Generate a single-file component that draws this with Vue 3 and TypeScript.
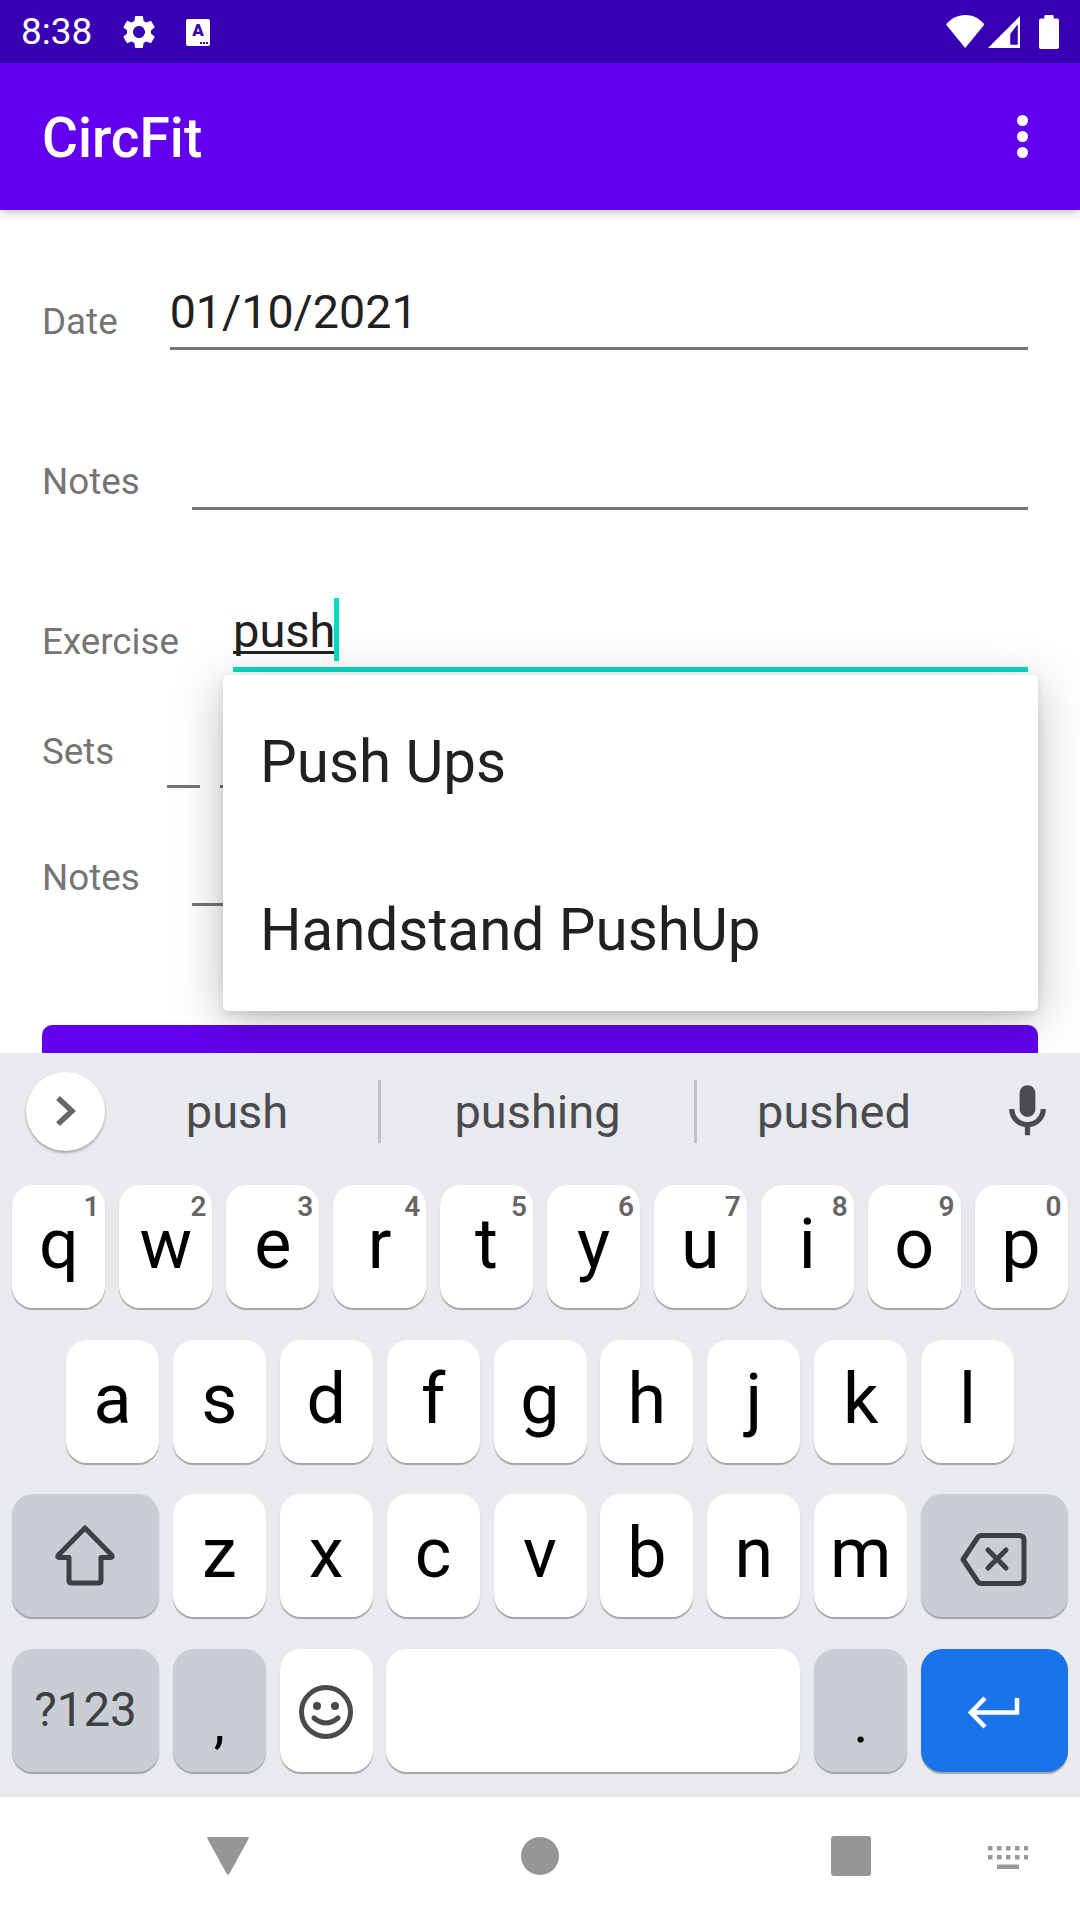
<script setup lang="ts">
const numberRow: [string, string][] = [
  ['q', '1'], ['w', '2'], ['e', '3'], ['r', '4'], ['t', '5'],
  ['y', '6'], ['u', '7'], ['i', '8'], ['o', '9'], ['p', '0'],
];
const homeRow = ['a', 's', 'd', 'f', 'g', 'h', 'j', 'k', 'l'];
const lowerRow = ['z', 'x', 'c', 'v', 'b', 'n', 'm'];
const suggestions = ['Push Ups', 'Handstand PushUp'];
const kbdDots = [0, 9, 18, 27, 36];
</script>

<template>
  <div class="phone">
    <div class="status-bar">
      <span class="clock">8:38</span>
      <svg class="gear" viewBox="0 0 24 24" fill="#fff">
        <path d="M19.14 12.94c.04-.3.06-.61.06-.94 0-.32-.02-.64-.07-.94l2.03-1.58c.18-.14.23-.41.12-.61l-1.92-3.32c-.12-.22-.37-.29-.59-.22l-2.39.96c-.5-.38-1.03-.7-1.62-.94l-.36-2.54c-.04-.24-.24-.41-.48-.41h-3.84c-.24 0-.43.17-.47.41l-.36 2.54c-.59.24-1.13.57-1.62.94l-2.39-.96c-.22-.08-.47 0-.59.22L2.74 8.87c-.12.21-.08.47.12.61l2.03 1.58c-.05.3-.09.63-.09.94s.02.64.07.94l-2.03 1.58c-.18.14-.23.41-.12.61l1.92 3.32c.12.22.37.29.59.22l2.39-.96c.5.38 1.03.7 1.62.94l.36 2.54c.05.24.24.41.48.41h3.84c.24 0 .44-.17.47-.41l.36-2.54c.59-.24 1.13-.56 1.62-.94l2.39.96c.22.08.47 0 .59-.22l1.92-3.32c.12-.22.07-.47-.12-.61l-2.01-1.58zM12 15.6c-1.98 0-3.6-1.62-3.6-3.6s1.62-3.6 3.6-3.6 3.6 1.62 3.6 3.6-1.62 3.6-3.6 3.6z" />
      </svg>
      <div class="a-badge">
        <span class="a-letter">A</span>
        <span class="a-dots"><i></i><i></i><i></i></span>
      </div>
      <div class="status-right">
        <svg class="wifi" viewBox="0 0 38.5 33" fill="#fff">
          <path d="M0 9.5C5 3.5 11.5 0 19.2 0S33.5 3.5 38.5 9.5L19.2 33z" />
        </svg>
        <svg class="signal" viewBox="0 0 32 32">
          <path fill="#fff" fill-rule="evenodd" d="M0 32L32 0V32zM22.4 18V28.6H29.6V8.4z" />
          <path fill="#3700B3" d="M22.6 18.2V28.4H29.4V9z" />
        </svg>
        <svg class="battery" viewBox="0 0 20 34" fill="#fff">
          <path d="M5.4 3.4V1a1 1 0 0 1 1-1h7.2a1 1 0 0 1 1 1v2.4h3.4a2 2 0 0 1 2 2V32a2 2 0 0 1-2 2H2a2 2 0 0 1-2-2V5.4a2 2 0 0 1 2-2z" />
        </svg>
      </div>
    </div>

    <header class="app-bar">
      <span class="title">CircFit</span>
      <div class="overflow"><i></i><i></i><i></i></div>
    </header>

    <main class="content">
      <form class="form" @submit.prevent>
        <div class="row row-date">
          <label class="label">Date</label>
          <div class="field"><span class="value">01/10/2021</span></div>
        </div>
        <div class="row row-notes">
          <label class="label">Notes</label>
          <div class="field"></div>
        </div>
        <div class="row row-exercise">
          <label class="label">Exercise</label>
          <div class="field focused">
            <span class="value composing">push</span>
            <span class="caret"></span>
          </div>
        </div>
        <div class="row row-sets">
          <label class="label">Sets</label>
          <div class="field short"></div>
          <div class="field"></div>
        </div>
        <div class="row row-notes2">
          <label class="label">Notes</label>
          <div class="field"></div>
        </div>
        <button type="submit" class="save"></button>
      </form>

      <ul class="dropdown">
        <li v-for="item in suggestions" :key="item">{{ item }}</li>
      </ul>
    </main>

    <section class="keyboard">
      <div class="strip">
        <div class="chevron">
          <svg viewBox="0 0 20 30" width="20" height="30" fill="none" stroke="#666" stroke-width="5.5">
            <path d="M2 2L16 15L2 28" />
          </svg>
        </div>
        <span class="word first">push</span>
        <span class="divider"></span>
        <span class="word second">pushing</span>
        <span class="divider"></span>
        <span class="word third">pushed</span>
        <svg class="mic" viewBox="0 0 24 24" fill="#4a4b4e">
          <path d="M12 14c1.66 0 3-1.34 3-3V5c0-1.66-1.34-3-3-3S9 3.34 9 5v6c0 1.66 1.34 3 3 3z" />
          <path d="M17 11c0 2.76-2.24 5-5 5s-5-2.24-5-5H5c0 3.53 2.61 6.43 6 6.92V21h2v-3.08c3.39-.49 6-3.39 6-6.92h-2z" />
        </svg>
      </div>

      <div class="keys">
        <div class="key-row">
          <div v-for="[letter, hint] in numberRow" :key="letter" class="key">
            {{ letter }}<span class="hint">{{ hint }}</span>
          </div>
        </div>
        <div class="key-row">
          <div v-for="letter in homeRow" :key="letter" class="key">{{ letter }}</div>
        </div>
        <div class="key-row">
          <div class="key wide fn icon">
            <svg class="shift" width="64" height="62" viewBox="0 0 64 62" fill="none" stroke="#3c4043" stroke-width="5" stroke-linejoin="round">
              <path d="M32 4L59 31.5Q60 33.500 57 33.500H48V56.500Q48 59 45.500 59H18.500Q16 59 16 56.500V33.500H7Q4 33.500 5 31.500z" />
            </svg>
          </div>
          <div v-for="letter in lowerRow" :key="letter" class="key">{{ letter }}</div>
          <div class="key wide fn icon">
            <svg class="backspace" width="68" height="55" viewBox="0 0 68 55" fill="none" stroke="#3c4043" stroke-width="5" stroke-linejoin="round" stroke-linecap="round">
              <path d="M4 27.500L19 5Q20 3.500 22 3.500H60Q65 3.500 65 8V47Q65 51.500 60 51.500H22Q20 51.500 19 50z" />
              <path d="M29 18L47 36M47 18L29 36" />
            </svg>
          </div>
        </div>
        <div class="key-row">
          <div class="key wide fn symbols">?123</div>
          <div class="key fn punct">,</div>
          <div class="key icon">
            <svg width="58" height="58" viewBox="0 0 58 58" fill="none" stroke="#4a4a4a" stroke-width="5">
              <circle cx="29" cy="29" r="24.500" />
              <circle cx="20" cy="23" r="4" fill="#4a4a4a" stroke="none" />
              <circle cx="38" cy="23" r="4" fill="#4a4a4a" stroke="none" />
              <path d="M17 35Q29 45 41 35" stroke-linecap="round" />
            </svg>
          </div>
          <div class="key space"></div>
          <div class="key fn punct">.</div>
          <div class="key wide enter icon">
            <svg width="52" height="33" viewBox="0 0 52 33" fill="none" stroke="#fff" stroke-width="4.500">
              <path d="M49 2V16.500H5" />
              <path d="M17 2L3 16.500L17 31" />
            </svg>
          </div>
        </div>
      </div>
    </section>

    <nav class="nav-bar">
      <svg class="nav-back" viewBox="0 0 42 38" fill="#969696">
        <path d="M1.500 0H40.500Q42.500 0 41.500 2L22.500 36.500Q21 38.500 19.500 36.500L.500 2Q-.500 0 1.500 0z" />
      </svg>
      <span class="nav-home"></span>
      <span class="nav-recent"></span>
      <svg class="nav-kbd" viewBox="0 0 40 23" fill="#999">
        <rect v-for="x in kbdDots" :key="'t' + x" :x="x" y="0" width="4.500" height="4.500" />
        <rect v-for="x in kbdDots" :key="'m' + x" :x="x" y="9" width="4.500" height="4.500" />
        <rect x="9" y="18.500" width="22" height="4.500" />
      </svg>
    </nav>
  </div>
</template>

<style scoped>
.phone {
  width: 1080px;
  height: 1920px;
  display: flex;
  flex-direction: column;
  overflow: hidden;
  background: #fff;
  font-family: Roboto, "Noto Sans", sans-serif;
}

/* status bar */
.status-bar {
  flex: 0 0 63px;
  display: flex;
  align-items: center;
  padding: 0 21px 0 21px;
  background: #3700b3;
  color: #fff;
}

.clock {
  font-size: 37px;
  line-height: 63px;
  width: 98px;
}

.gear {
  width: 40px;
  height: 40px;
  margin-right: 27px;
}

.a-badge {
  width: 24px;
  height: 27px;
  margin-top: 1px;
  border-radius: 2px;
  background: #fff;
  position: relative;
  color: #3700b3;
  overflow: hidden;
}

.a-letter {
  position: absolute;
  left: 0;
  right: 0;
  top: 2px;
  text-align: center;
  font-size: 17px;
  line-height: 18px;
  font-weight: 900;
}

.a-dots {
  position: absolute;
  right: 2px;
  bottom: 2px;
  display: flex;
  gap: 1px;
}

.a-dots i {
  width: 2px;
  height: 2px;
  background: #3700b3;
}

.status-right {
  margin-left: auto;
  display: flex;
  align-items: center;
}

.wifi {
  width: 38.5px;
  height: 33px;
}

.signal {
  width: 32px;
  height: 32px;
  margin-left: 4px;
}

.battery {
  width: 20px;
  height: 34px;
  margin-left: 19px;
}

/* app bar */
.app-bar {
  flex: 0 0 147px;
  display: flex;
  align-items: center;
  justify-content: space-between;
  padding: 0 52px 0 42px;
  background: #6200ee;
  color: #fff;
  box-shadow: 0 3px 8px rgba(0, 0, 0, 0.22);
  position: relative;
  z-index: 2;
}

.title {
  font-size: 55px;
  font-weight: 500;
  padding-top: 2px;
}

.overflow {
  display: flex;
  flex-direction: column;
  gap: 5px;
}

.overflow i {
  width: 11px;
  height: 11px;
  border-radius: 50%;
  background: #fff;
}

/* form */
.content {
  flex: 0 0 843px;
  position: relative;
  overflow: hidden;
}

.form {
  display: flex;
  flex-direction: column;
  padding: 0 42px;
}

.row {
  display: flex;
  align-items: flex-end;
  column-gap: 52px;
  padding-right: 10px;
}

.row-date { margin-top: 76px; }
.row-notes { margin-top: 96px; }
.row-exercise { margin-top: 93px; }
.row-exercise { column-gap: 54px; }
.row-sets { margin-top: 52px; column-gap: 0; }
.row-notes2 { margin-top: 54px; }

.label {
  font-size: 36.75px;
  line-height: 44px;
  color: #757575;
}

.row-date .label { margin-bottom: 6px; }
.row-notes .label { margin-bottom: 6px; }
.row-exercise .label { margin-bottom: 8px; }
.row-sets .label { margin-bottom: 14px; margin-right: 53px; }
.row-notes2 .label { margin-bottom: 6px; }

.field {
  flex: 1;
  height: 64px;
  border-bottom: 3px solid #757575;
  box-sizing: border-box;
  position: relative;
}

.field.short {
  flex: 0 0 33px;
  margin-right: 20px;
}

.field.focused {
  height: 69px;
  border-bottom: 5px solid #03dac5;
}

.value {
  display: block;
  font-size: 46.6px;
  line-height: 56px;
  color: #212121;
}

.row-date .value {
  margin-top: -2px;
}

.composing {
  font-size: 47px;
  text-decoration: underline;
  text-decoration-thickness: 3px;
  text-underline-offset: 4px;
  text-decoration-skip-ink: none;
}

.caret {
  position: absolute;
  left: 101px;
  top: -5px;
  width: 5px;
  height: 63px;
  background: #03dac5;
}

.save {
  display: block;
  width: 100%;
  height: 120px;
  margin-top: 119px;
  padding: 0;
  border: none;
  border-radius: 10px;
  background: #6200ee;
}

.dropdown {
  position: absolute;
  left: 223px;
  top: 465px;
  width: 815px;
  height: 336px;
  margin: 0;
  padding: 0;
  list-style: none;
  border-radius: 5px;
  background: #fff;
  box-shadow: 0 10px 50px rgba(0, 0, 0, 0.26), 0 3px 8px rgba(0, 0, 0, 0.1);
}

.dropdown li {
  height: 168px;
  line-height: 174px;
  padding-left: 37px;
  font-size: 58.3px;
  color: #212121;
}

/* keyboard */
.keyboard {
  flex: 0 0 744px;
  box-sizing: border-box;
  background: #e8eaed;
  border-bottom: 3px solid #dfe1e5;
  position: relative;
  z-index: 3;
}

.strip {
  height: 132px;
  display: flex;
  align-items: center;
  padding: 0 0 15px 26px;
  box-sizing: border-box;
}

.chevron {
  flex: 0 0 79px;
  height: 79px;
  margin-top: -1px;
  display: flex;
  align-items: center;
  justify-content: center;
  border-radius: 50%;
  background: #fff;
  box-shadow: 0 2px 3px rgba(0, 0, 0, 0.3);
}

.word {
  font-size: 47px;
  text-align: center;
  color: #4a4b4e;
}

.word.first {
  width: 264px;
  margin-right: 9px;
}

.word.second {
  width: 313px;
}

.word.third {
  width: 274px;
}

.divider {
  flex: 0 0 3px;
  height: 63px;
  background: #c0c1c4;
}

.mic {
  width: 63px;
  height: 63px;
  margin-left: 25px;
}

.keys {
  display: flex;
  flex-direction: column;
  gap: 31.67px;
  padding: 0 12px;
}

.key-row {
  display: flex;
  justify-content: center;
  gap: 13.9px;
}

.key {
  flex: 0 0 93px;
  height: 123px;
  position: relative;
  display: flex;
  align-items: center;
  justify-content: center;
  padding-bottom: 5px;
  box-sizing: border-box;
  border-radius: 21px;
  background: #fff;
  box-shadow: 0 2px 1px rgba(0, 0, 0, 0.3);
  font-size: 70px;
  color: #000;
}

.key.icon {
  padding: 4px 0 0;
}

.hint {
  position: absolute;
  top: 6px;
  right: 6px;
  font-size: 28px;
  line-height: 32px;
  font-weight: 600;
  color: #666;
}

.key.wide {
  flex-basis: 146.5px;
}

.key.fn {
  background: #cacdd4;
}

.key.space {
  flex-basis: 414px;
}

.key.enter {
  background: #1a73e8;
}

.shift {
  margin: 0 2px 6px 0;
}

.backspace {
  margin: 4px 3px 0 0;
}

.symbols {
  font-size: 47.5px;
  padding: 0;
  color: #3c4043;
}

.punct {
  font-size: 56px;
  padding: 26px 0 0;
}

/* navigation */
.nav-bar {
  flex: 1;
  display: flex;
  align-items: center;
  padding-left: 207px;
  background: #fff;
}

.nav-back {
  width: 42px;
  height: 38px;
  margin-top: -6px;
}

.nav-home {
  width: 38px;
  height: 38px;
  margin-left: 272px;
  margin-top: -6px;
  border-radius: 50%;
  background: #969696;
}

.nav-recent {
  width: 40px;
  height: 40px;
  margin-left: 272px;
  margin-top: -6px;
  border-radius: 3px;
  background: #969696;
}

.nav-kbd {
  width: 40px;
  height: 23px;
  margin-left: 117px;
  margin-top: -3px;
}
</style>
